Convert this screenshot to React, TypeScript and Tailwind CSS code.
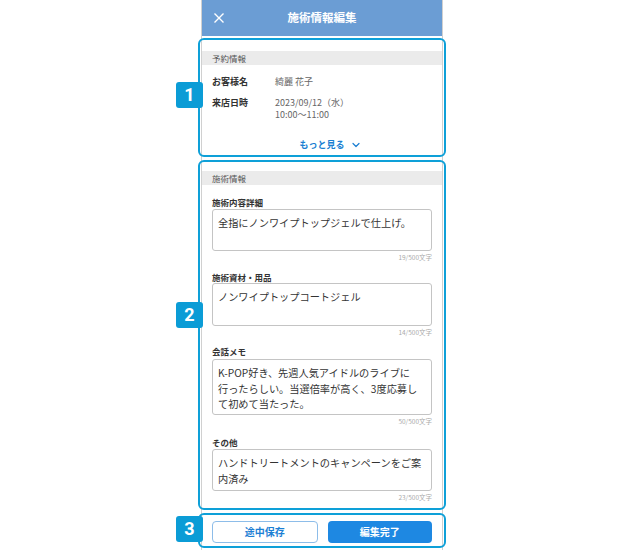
import { ChevronDown } from "lucide-react";

const font = { fontFamily: '"Noto Sans CJK JP", "Noto Sans", sans-serif' };

// 注釈の番号バッジ
function Badge({ n, top }: { n: string; top: string }) {
  return (
    <div
      className={`absolute -left-[26px] ${top} w-[27px] h-[26px] rounded-[3px] bg-[#0b9cd6] text-white flex items-center justify-center text-[18px] font-bold font-['Roboto',sans-serif] leading-none z-10`}
    >
      {n}
    </div>
  );
}

// 注釈の枠線
function Outline() {
  return (
    <div className="pointer-events-none absolute -left-[4px] -right-[4px] inset-y-0 border-2 border-[#0ea0d8] rounded-[6px]" />
  );
}

function SectionBar({ title }: { title: string }) {
  return (
    <div className="h-[14px] bg-[#ebebeb] px-[10px] flex items-center text-[8.5px] text-[#555] leading-none">
      {title}
    </div>
  );
}

function Field({
  label,
  text,
  count,
  height,
  labelTop,
  boxTop,
}: {
  label: string;
  text: string;
  count: string;
  height: string;
  labelTop: string;
  boxTop: string;
}) {
  return (
    <div className="px-[10px]">
      <div className={`${labelTop} text-[8.5px] font-bold text-[#333] leading-[12px]`}>{label}</div>
      <div
        className={`${boxTop} ${height} border border-[#c4c4c4] rounded-[3px] px-[5px] pt-[5px] text-[10.2px] leading-[15.5px] text-[#333] whitespace-pre-line`}
      >
        {text}
      </div>
      <div className="mt-[2px] text-right text-[6.5px] text-[#aaa] leading-[8px]">{count}</div>
    </div>
  );
}

export default function App() {
  return (
    <div className="w-[644px] h-[550px] bg-white overflow-hidden" style={font}>
      <div className="mx-auto w-[242px] h-[550px] border-x border-[#d0d0d0] bg-white">
        {/* ヘッダー */}
        <div className="relative h-[36px] bg-[#6b9dd4] flex items-center justify-center">
          <svg
            className="absolute left-[12px] top-[13px]"
            width="10"
            height="10"
            viewBox="0 0 10 10"
            fill="none"
            stroke="white"
            strokeWidth="1.4"
          >
            <path d="M0.5 0.5L9.5 9.5M9.5 0.5L0.5 9.5" />
          </svg>
          <span className="text-white font-bold text-[11.5px] leading-none">施術情報編集</span>
        </div>

        {/* 予約情報 */}
        <div className="relative mt-[2px] h-[119px] pt-[13px]">
          <Outline />
          <Badge n="1" top="top-[44px]" />
          <SectionBar title="予約情報" />
          <div className="px-[10px] mt-[10px] flex text-[9px] leading-[14px]">
            <div className="w-[63px] font-bold text-[#333]">お客様名</div>
            <div className="text-[#666]">綺麗 花子</div>
          </div>
          <div className="px-[10px] mt-[8px] flex text-[9px] leading-[12px]">
            <div className="w-[63px] font-bold text-[#333]">来店日時</div>
            <div className="text-[#666]">
              <div>2023/09/12（水）</div>
              <div>10:00〜11:00</div>
            </div>
          </div>
          <div className="mt-[18px] flex justify-center">
            <span className="relative text-[9px] font-bold text-[#1b7fd2] leading-[12px]">
              もっと見る
              <ChevronDown
                className="absolute -right-[17px] top-[0px]"
                size={12}
                strokeWidth={2.4}
                color="#1b7fd2"
              />
            </span>
          </div>
        </div>

        {/* 施術情報 */}
        <div className="relative mt-[3px] h-[350px] pt-[11px]">
          <Outline />
          <Badge n="2" top="top-[142px]" />
          <SectionBar title="施術情報" />
          <Field
            label="施術内容詳細"
            text="全指にノンワイプトップジェルで仕上げ。"
            count="19/500文字"
            height="h-[42px]"
            labelTop="mt-[11px]"
            boxTop="mt-[1px]"
          />
          <Field
            label="施術資材・用品"
            text="ノンワイプトップコートジェル"
            count="14/500文字"
            height="h-[43px]"
            labelTop="mt-[10px]"
            boxTop="mt-[0px]"
          />
          <Field
            label="会話メモ"
            text={"K-POP好き、先週人気アイドルのライブに\n行ったらしい。当選倍率が高く、3度応募し\nて初めて当たった。"}
            count="50/500文字"
            height="h-[56px]"
            labelTop="mt-[9px]"
            boxTop="mt-[2px]"
          />
          <Field
            label="その他"
            text={"ハンドトリートメントのキャンペーンをご案\n内済み"}
            count="23/500文字"
            height="h-[42px]"
            labelTop="mt-[11px]"
            boxTop="mt-[1px]"
          />
        </div>

        {/* ボタン */}
        <div className="relative mt-[3px] h-[35px] pt-[8px] px-[10px] flex gap-[10px]">
          <Outline />
          <Badge n="3" top="top-[3px]" />
          <button className="w-[106px] h-[22px] rounded-[4px] border border-[#8dbde9] bg-white text-[#1d7fd4] text-[10px] font-bold leading-none">
            途中保存
          </button>
          <button className="w-[105px] h-[22px] rounded-[4px] bg-[#1e88e2] text-white text-[10px] font-bold leading-none">
            編集完了
          </button>
        </div>
      </div>
    </div>
  );
}
